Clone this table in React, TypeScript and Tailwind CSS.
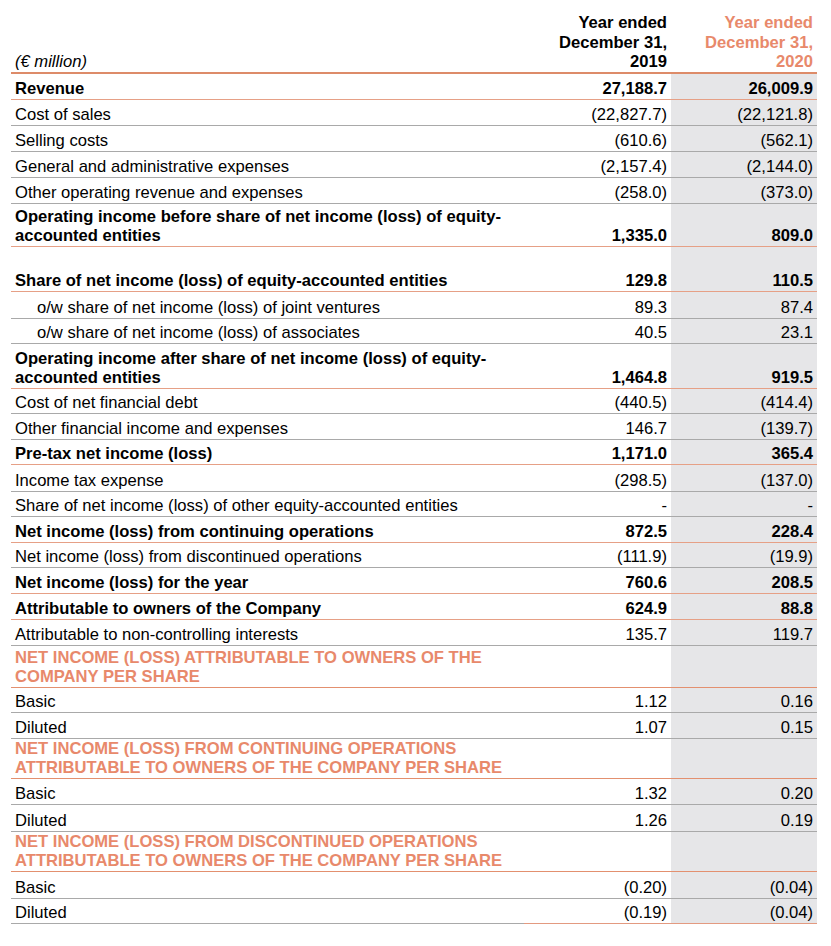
import React from "react";

type Row = {
  label: React.ReactNode;
  v1?: string;
  v2?: string;
  kind?: "bold" | "normal" | "section";
  indent?: boolean;
  h: string;
  valueLine?: string;
};

const GRAY = "border-[#a9a9a9]";
const ORANGE = "border-[#e6a086]";
const SECTION = "border-[#e3906f]";

const rows: Row[] = [
  { label: "Revenue", v1: "27,188.7", v2: "26,009.9", kind: "bold", h: "h-[26px]" },
  { label: "Cost of sales", v1: "(22,827.7)", v2: "(22,121.8)", h: "h-[26px]" },
  { label: "Selling costs", v1: "(610.6)", v2: "(562.1)", h: "h-[26px]" },
  { label: "General and administrative expenses", v1: "(2,157.4)", v2: "(2,144.0)", h: "h-[26px]" },
  { label: "Other operating revenue and expenses", v1: "(258.0)", v2: "(373.0)", h: "h-[26px]" },
  {
    label: (
      <>
        Operating income before share of net income (loss) of equity-
        <br />
        accounted entities
      </>
    ),
    v1: "1,335.0",
    v2: "809.0",
    kind: "bold",
    h: "h-[43px]",
  },
  { label: "Share of net income (loss) of equity-accounted entities", v1: "129.8", v2: "110.5", kind: "bold", h: "h-[45px]" },
  { label: "o/w share of net income (loss) of joint ventures", v1: "89.3", v2: "87.4", indent: true, h: "h-[27px]" },
  { label: "o/w share of net income (loss) of associates", v1: "40.5", v2: "23.1", indent: true, h: "h-[25px]" },
  {
    label: (
      <>
        Operating income after share of net income (loss) of equity-
        <br />
        accounted entities
      </>
    ),
    v1: "1,464.8",
    v2: "919.5",
    kind: "bold",
    h: "h-[45px]",
  },
  { label: "Cost of net financial debt", v1: "(440.5)", v2: "(414.4)", h: "h-[25px]" },
  { label: "Other financial income and expenses", v1: "146.7", v2: "(139.7)", h: "h-[26px]" },
  { label: "Pre-tax net income (loss)", v1: "1,171.0", v2: "365.4", kind: "bold", h: "h-[25px]" },
  { label: "Income tax expense", v1: "(298.5)", v2: "(137.0)", h: "h-[27px]" },
  { label: "Share of net income (loss) of other equity-accounted entities", v1: "-", v2: "-", h: "h-[25px]" },
  { label: "Net income (loss) from continuing operations", v1: "872.5", v2: "228.4", kind: "bold", h: "h-[26px]" },
  { label: "Net income (loss) from discontinued operations", v1: "(111.9)", v2: "(19.9)", h: "h-[25px]" },
  { label: "Net income (loss) for the year", v1: "760.6", v2: "208.5", kind: "bold", h: "h-[26px]" },
  { label: "Attributable to owners of the Company", v1: "624.9", v2: "88.8", kind: "bold", h: "h-[26px]" },
  { label: "Attributable to non-controlling interests", v1: "135.7", v2: "119.7", h: "h-[26px]" },
  {
    label: (
      <>
        NET INCOME (LOSS) ATTRIBUTABLE TO OWNERS OF THE
        <br />
        COMPANY PER SHARE
      </>
    ),
    kind: "section",
    h: "h-[42px]",
  },
  { label: "Basic", v1: "1.12", v2: "0.16", h: "h-[25px]" },
  { label: "Diluted", v1: "1.07", v2: "0.15", h: "h-[26px]" },
  {
    label: (
      <>
        NET INCOME (LOSS) FROM CONTINUING OPERATIONS
        <br />
        ATTRIBUTABLE TO OWNERS OF THE COMPANY PER SHARE
      </>
    ),
    kind: "section",
    h: "h-[40px]",
  },
  { label: "Basic", v1: "1.32", v2: "0.20", h: "h-[26px]" },
  { label: "Diluted", v1: "1.26", v2: "0.19", h: "h-[27px]" },
  {
    label: (
      <>
        NET INCOME (LOSS) FROM DISCONTINUED OPERATIONS
        <br />
        ATTRIBUTABLE TO OWNERS OF THE COMPANY PER SHARE
      </>
    ),
    kind: "section",
    h: "h-[40px]",
  },
  { label: "Basic", v1: "(0.20)", v2: "(0.04)", h: "h-[27px]" },
  { label: "Diluted", v1: "(0.19)", v2: "(0.04)", h: "h-[25px]", valueLine: "border-[#e39a80]" },
];

const App: React.FC = () => {
  return (
    <div
      className="w-[831px] h-[946px] bg-white pt-[13px] pl-[11px] text-black"
      style={{ fontFamily: '"Liberation Sans", Arial, sans-serif' }}
    >
      <div className="w-[806px] text-[16.6px] leading-[19.5px]">
        {/* Header */}
        <div className="flex border-b-2 border-[#dd8b69]">
          <div className="w-[513px] flex items-end pl-[4px] italic">(€ million)</div>
          <div className="w-[147px] text-right pr-[4px] font-bold">
            Year ended
            <br />
            December 31,
            <br />
            2019
          </div>
          <div className="w-[146px] text-right pr-[4px] font-bold text-[#e8896b]">
            Year ended
            <br />
            December 31,
            <br />
            2020
          </div>
        </div>

        {/* Rows */}
        {rows.map((r, i) => {
          const kind = r.kind ?? "normal";
          const line = kind === "bold" ? ORANGE : kind === "section" ? SECTION : GRAY;
          const valueLine = r.valueLine ?? line;
          const weight = kind === "normal" ? "font-normal" : "font-bold";
          return (
            <div key={i} className={`flex ${r.h}`}>
              <div
                className={`w-[513px] flex items-end border-b ${line} whitespace-nowrap ${weight} ${
                  r.indent ? "pl-[26px]" : "pl-[4px]"
                } ${kind === "section" ? "text-[#e8896b]" : ""}`}
              >
                <div>{r.label}</div>
              </div>
              <div className={`w-[147px] flex items-end justify-end border-b ${valueLine} pr-[4px] ${weight}`}>
                {r.v1}
              </div>
              <div
                className={`w-[146px] flex items-end justify-end border-b ${valueLine} bg-[#e6e6e8] pr-[4px] ${weight}`}
              >
                {r.v2}
              </div>
            </div>
          );
        })}
      </div>
    </div>
  );
};

export default App;
